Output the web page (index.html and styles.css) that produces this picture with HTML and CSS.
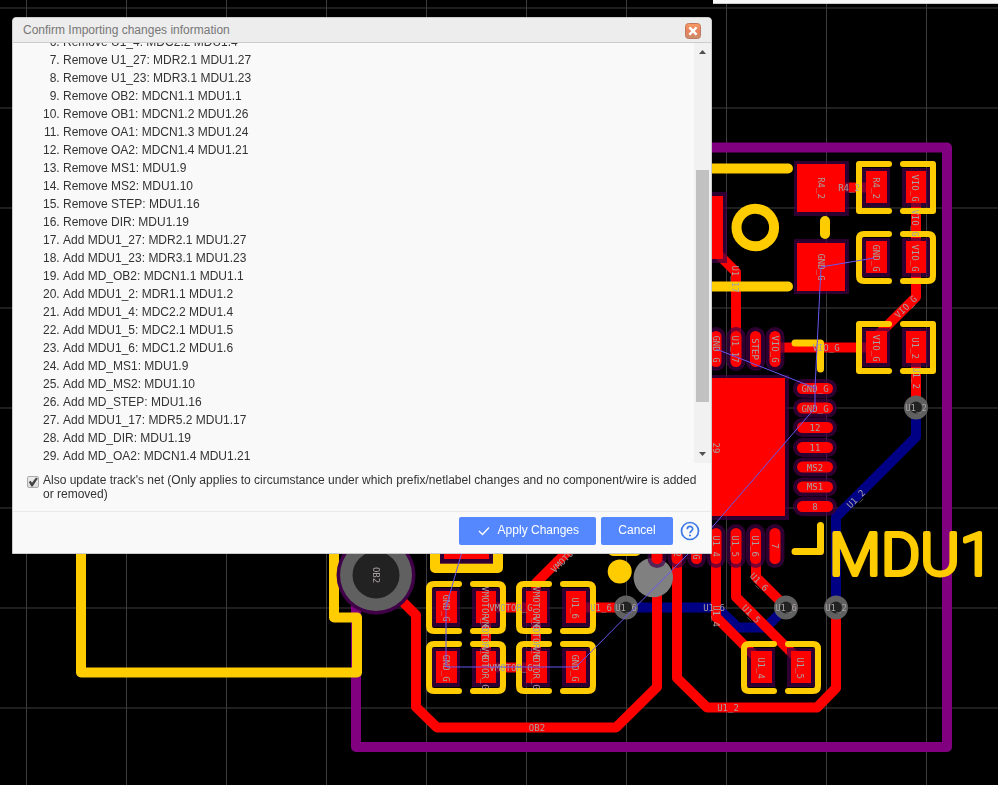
FILE: index.html
```html
<!DOCTYPE html>
<html lang="en">
<head>
<meta charset="utf-8">
<title>Confirm Importing changes information</title>
<link rel="stylesheet" href="styles.css">
</head>
<body>
<svg class="board" aria-label="PCB layout">
  <defs>
    <pattern id="grid" x="26" y="7" width="100" height="100" patternUnits="userSpaceOnUse">
      <path d="M0 1H100" stroke="#1e1e1e" stroke-width="2"/>
      <path d="M.5 0V100" stroke="#3c3c3c"/>
    </pattern>
    <g id="pads">
      <rect class="halo" x="-34" y="-19" width="28" height="39"/>
      <rect class="copper" x="-30" y="-16" width="21" height="32"/>
      <rect class="halo" x="6" y="-19" width="28" height="39"/>
      <rect class="copper" x="10" y="-16" width="20" height="32"/>
    </g>
    <g id="round">
      <use href="#pads"/>
      <path class="outline" d="M-7-23H-32Q-37-23-37-18V19Q-37 24-32 24H-7M7-23H32Q37-23 37-18V19Q37 24 32 24H7"/>
    </g>
    <g id="square">
      <use href="#pads"/>
      <path class="outline" d="M-7-23H-37V24H-7M7-23H37V24H7"/>
    </g>
    <g id="vpin">
      <rect class="halo" x="-9.500" y="-22" width="19" height="44" rx="9.500"/>
      <rect class="copper" x="-5.500" y="-18" width="11" height="36" rx="5.500"/>
    </g>
    <g id="hpin">
      <rect class="halo" x="-22" y="-9.500" width="44" height="19" rx="9.500"/>
      <rect class="copper" x="-18" y="-5.500" width="36" height="11" rx="5.500"/>
    </g>
    <g id="via">
      <circle r="12" fill="#606060"/>
      <circle r="6" fill="#222"/>
    </g>
  </defs>

  <rect width="100%" height="100%" fill="url(#grid)"/>

  <g class="track blue">
    <path d="M836 607V517L916 437V407"/>
    <path d="M626 607.500H717L738 627.500H766L786 607"/>
  </g>

  <path class="edge" d="M356 560V747H947V147.500H690"/>

  <g class="track red">
    <path d="M376 575L416 615V707L437 727.500H616L657 687V540"/>
    <path d="M677 550V678L707 707.500H817L836 688V607"/>
    <path d="M916 347V407"/>
    <path d="M916 187V297L876 337V347"/>
    <path d="M821 187.500H876"/>
    <path d="M775 347.500H876"/>
    <path d="M706 242L736 272V347"/>
    <path d="M716 545V617L761 662"/>
    <path d="M736 545V597L801 662"/>
    <path d="M756 545V577L786 607"/>
    <path d="M590 529L536 583V667M486 607V667M486 607.500H536M486 667.500H536M576 607.500H626"/>
  </g>

  <path class="silk" d="M81 540V672.500H357V617.500H334V540"/>
  <path class="silk" d="M700 168.500H788M700 286.500H788M825 221V234M613 551H636"/>
  <circle cx="755.300" cy="227.500" r="18.800" fill="none" stroke="#fc0" stroke-width="10"/>
  <circle cx="619.700" cy="571.500" r="12" fill="#fc0"/>
  <path class="silk mark" d="M795 343H820.500V369M820.500 525.500V551.500H795"/>
  <path class="silk" d="M435 540V568H498V540"/>

  <circle cx="376" cy="575" r="39.500" fill="#400048"/>
  <circle cx="376" cy="575" r="36" fill="#606060"/>
  <circle cx="376" cy="575" r="23.500" fill="#222"/>
  <circle cx="653.300" cy="577.500" r="19.700" fill="#808080"/>

  <rect class="halo" x="440" y="520" width="53" height="44"/>
  <rect class="copper" x="444" y="520" width="45" height="39"/>
  <rect class="halo" x="690" y="192" width="37" height="71"/>
  <rect class="copper" x="690" y="196" width="33" height="63"/>
  <rect class="halo" x="794" y="161" width="55" height="55"/>
  <rect class="copper" x="797" y="164" width="48" height="48"/>
  <rect class="halo" x="794" y="239" width="55" height="55"/>
  <rect class="copper" x="797" y="243" width="48" height="48"/>
  <rect class="halo" x="640" y="375" width="149" height="145"/>
  <rect class="copper" x="640" y="378" width="145" height="138"/>

  <use href="#square" x="896" y="187"/>
  <use href="#round" x="896" y="257"/>
  <use href="#square" x="896" y="347"/>
  <use href="#round" x="466" y="607"/>
  <use href="#round" x="556" y="607"/>
  <use href="#round" x="466" y="667"/>
  <use href="#round" x="556" y="667"/>
  <use href="#round" x="781" y="667"/>

  <use href="#vpin" x="716" y="349"/><use href="#vpin" x="736" y="349"/>
  <use href="#vpin" x="755.500" y="349"/><use href="#vpin" x="775" y="349"/>
  <use href="#vpin" x="657" y="546"/><use href="#vpin" x="677" y="546"/>
  <use href="#vpin" x="696.500" y="546"/><use href="#vpin" x="716" y="546"/>
  <use href="#vpin" x="736" y="546"/><use href="#vpin" x="755.500" y="546"/>
  <use href="#vpin" x="775" y="546"/>
  <use href="#hpin" x="815" y="388.500"/><use href="#hpin" x="815" y="408"/>
  <use href="#hpin" x="815" y="427.500"/><use href="#hpin" x="815" y="447.500"/>
  <use href="#hpin" x="815" y="467"/><use href="#hpin" x="815" y="487"/>
  <use href="#hpin" x="815" y="506.500"/>

  <use href="#via" x="916" y="407.500"/><use href="#via" x="626" y="607.500"/>
  <use href="#via" x="786" y="607.500"/><use href="#via" x="836" y="607.500"/>

  <text class="refdes" x="829" y="575">MDU1</text>

  <g class="net">
    <text x="849" y="188">R4_2</text>
    <text x="826" y="348">VIO_G</text>
    <text x="815" y="389">GND_G</text>
    <text x="815" y="409">GND_G</text>
    <text x="815" y="428">12</text>
    <text x="815" y="448">11</text>
    <text x="815" y="468">MS2</text>
    <text x="815" y="487">MS1</text>
    <text x="815" y="507">8</text>
    <text x="916" y="408">U1_2</text>
    <text x="601" y="608">U1_6</text>
    <text x="626" y="608">U1_6</text>
    <text x="714" y="608">U1_6</text>
    <text x="786" y="608">U1_6</text>
    <text x="836" y="608">U1_2</text>
    <text x="728" y="708">U1_2</text>
    <text x="537" y="728">OB2</text>
    <text x="511" y="608">VMOTOR_G</text>
    <text x="511" y="668">VMOTOR_G</text>
    <text transform="translate(376 575) rotate(90)">OB2</text>
    <text transform="translate(821 188) rotate(90)">R4_2</text>
    <text transform="translate(821 267) rotate(90)">GND_G</text>
    <text transform="translate(876 188) rotate(90)">R4_2</text>
    <text transform="translate(915 188) rotate(90)">VIO_G</text>
    <text transform="translate(915 223) rotate(90)">VIO_G</text>
    <text transform="translate(876 258) rotate(90)">GND_G</text>
    <text transform="translate(915 258) rotate(90)">VIO_G</text>
    <text transform="translate(876 348) rotate(90)">VIO_G</text>
    <text transform="translate(915 348) rotate(90)">U1_2</text>
    <text transform="translate(916 378) rotate(90)">U1_2</text>
    <text transform="translate(735 279) rotate(90)">U1_17</text>
    <text transform="translate(716 349) rotate(90)">GND_G</text>
    <text transform="translate(735 349) rotate(90)">U1_17</text>
    <text transform="translate(755 349) rotate(90)">STEP</text>
    <text transform="translate(775 349) rotate(90)">VIO_G</text>
    <text transform="translate(716 448) rotate(90)">29</text>
    <text transform="translate(677 546) rotate(90)">U1_2</text>
    <text transform="translate(696 546) rotate(90)">GND_G</text>
    <text transform="translate(716 546) rotate(90)">U1_4</text>
    <text transform="translate(735 546) rotate(90)">U1_5</text>
    <text transform="translate(755 546) rotate(90)">U1_6</text>
    <text transform="translate(775 546) rotate(90)">7</text>
    <text transform="translate(716 616) rotate(90)">U1_4</text>
    <text transform="translate(761 668) rotate(90)">U1_4</text>
    <text transform="translate(800 668) rotate(90)">U1_5</text>
    <text transform="translate(446 608) rotate(90)">GND_G</text>
    <text transform="translate(446 668) rotate(90)">GND_G</text>
    <text transform="translate(485 608) rotate(90)">VMOTOR_G</text>
    <text transform="translate(485 638) rotate(90)">VMOTOR_G</text>
    <text transform="translate(485 668) rotate(90)">VMOTOR_G</text>
    <text transform="translate(536 608) rotate(90)">VMOTOR_G</text>
    <text transform="translate(536 638) rotate(90)">VMOTOR_G</text>
    <text transform="translate(536 668) rotate(90)">VMOTOR_G</text>
    <text transform="translate(575 608) rotate(90)">U1_6</text>
    <text transform="translate(575 668) rotate(90)">GND_G</text>
    <text transform="translate(759 582) rotate(45)">U1_6</text>
    <text transform="translate(751 614) rotate(45)">U1_5</text>
    <text transform="translate(906 307) rotate(-45)">VIO_G</text>
    <text transform="translate(856 499) rotate(-45)">U1_2</text>
    <text transform="translate(568 556) rotate(-45)">VMOTOR_G</text>
  </g>

  <path class="rats" d="M874 258L821 267L815 388V408L696 546L576 667H446V607L466 538M716 349L815 388"/>
</svg>

<div class="toolbar-edge"></div>

<main class="dialog" role="dialog" aria-labelledby="dialog-title">
  <header class="dialog-header">
    <h1 id="dialog-title">Confirm Importing changes information</h1>
    <button class="close" type="button" aria-label="Close">
      <svg viewBox="0 0 16 16" width="16" height="16">
        <defs><linearGradient id="warm" x2="0" y2="1"><stop stop-color="#f99b62"/><stop offset=".5" stop-color="#e8825e"/><stop offset="1" stop-color="#c98e6c"/></linearGradient></defs>
        <rect x=".5" y=".5" width="15" height="15" rx="3" fill="url(#warm)" stroke="#c07860"/>
        <path d="M5.200 5.200L10.800 10.800M10.800 5.200L5.200 10.800" stroke="#fff" stroke-width="2.400" stroke-linecap="square"/>
      </svg>
    </button>
  </header>

  <div class="changes">
    <ol start="6">
      <li>Remove U1_4: MDC2.2 MDU1.4</li>
      <li>Remove U1_27: MDR2.1 MDU1.27</li>
      <li>Remove U1_23: MDR3.1 MDU1.23</li>
      <li>Remove OB2: MDCN1.1 MDU1.1</li>
      <li>Remove OB1: MDCN1.2 MDU1.26</li>
      <li>Remove OA1: MDCN1.3 MDU1.24</li>
      <li>Remove OA2: MDCN1.4 MDU1.21</li>
      <li>Remove MS1: MDU1.9</li>
      <li>Remove MS2: MDU1.10</li>
      <li>Remove STEP: MDU1.16</li>
      <li>Remove DIR: MDU1.19</li>
      <li>Add MDU1_27: MDR2.1 MDU1.27</li>
      <li>Add MDU1_23: MDR3.1 MDU1.23</li>
      <li>Add MD_OB2: MDCN1.1 MDU1.1</li>
      <li>Add MDU1_2: MDR1.1 MDU1.2</li>
      <li>Add MDU1_4: MDC2.2 MDU1.4</li>
      <li>Add MDU1_5: MDC2.1 MDU1.5</li>
      <li>Add MDU1_6: MDC1.2 MDU1.6</li>
      <li>Add MD_MS1: MDU1.9</li>
      <li>Add MD_MS2: MDU1.10</li>
      <li>Add MD_STEP: MDU1.16</li>
      <li>Add MDU1_17: MDR5.2 MDU1.17</li>
      <li>Add MD_DIR: MDU1.19</li>
      <li>Add MD_OA2: MDCN1.4 MDU1.21</li>
    </ol>
    <div class="scrollbar" aria-hidden="true">
      <svg viewBox="0 0 17 17" width="17" height="17"><path d="M5 11L8.500 7L12 11Z" fill="#505050"/></svg>
      <div class="rail"><div class="thumb"></div></div>
      <svg viewBox="0 0 17 17" width="17" height="17"><path d="M5 6L8.500 10L12 6Z" fill="#505050"/></svg>
    </div>
  </div>

  <div class="option">
    <input id="update-net" type="checkbox" checked>
    <label for="update-net">Also update track's net (Only applies to circumstance under which prefix/netlabel changes and no component/wire is added or removed)</label>
  </div>

  <footer class="actions">
    <button class="primary" type="button">
      <svg viewBox="0 0 12 10" width="12" height="10"><path d="M1 5L4.500 8.500L11 1.500" fill="none" stroke="#fff" stroke-width="1.300"/></svg>
      Apply Changes
    </button>
    <button class="primary" type="button">Cancel</button>
    <button class="help" type="button" aria-label="Help">
      <svg viewBox="0 0 20 20" width="20" height="20" fill="none" stroke="#3b78e7" stroke-width="1.700"><circle cx="10" cy="10" r="8.500"/><path d="M7.300 8.200C7.300 4.500 12.700 4.600 12.700 8C12.700 9.800 10 10 10 12.200"/><path d="M10 13.700V15.300" stroke-width="2"/></svg>
    </button>
  </footer>
</main>
</body>
</html>
```

FILE: styles.css
```css
* {
  box-sizing: border-box;
}

body {
  margin: 0;
  min-height: 100vh;
  overflow: hidden;
  background: #000;
  color: #333;
  font: 12px/18px "Liberation Sans", Arial, sans-serif;
}

button {
  border: 0;
  padding: 0;
  background: none;
  font: inherit;
  cursor: pointer;
}

svg {
  display: block;
}

/* Board canvas */
.board {
  position: fixed;
  inset: 0;
  width: 100%;
  height: 100%;
}

.track,
.edge,
.silk,
.outline,
.rats {
  fill: none;
  stroke-width: 10px;
  stroke-linecap: round;
  stroke-linejoin: round;
}

.red { stroke: #f00; }
.blue { stroke: #000084; }
.edge { stroke: #800080; }
.silk { stroke: #fc0; }
.mark { stroke-width: 7px; }

.outline {
  stroke: #fc0;
  stroke-width: 6px;
}

.rats {
  stroke: #6458f0;
  stroke-width: 1px;
}

.halo { fill: rgb(64 0 70 / 70%); }
.copper { fill: #f00; }

.net text {
  fill: #a8a0a0;
  font: 9px "DejaVu Sans Mono", monospace;
  text-anchor: middle;
  dominant-baseline: central;
}

.refdes {
  fill: #fc0;
  stroke: #fc0;
  stroke-width: 4px;
  stroke-linejoin: round;
  font: 300 60px Roboto, sans-serif;
}

.toolbar-edge {
  position: absolute;
  top: 0;
  right: 0;
  left: 713px;
  height: 4px;
  border-bottom: 1px solid #ccc;
  background: #f8f8f8;
}

/* Dialog */
.dialog {
  position: absolute;
  top: 17px;
  left: 12px;
  width: 700px;
  max-width: calc(100vw - 24px);
  overflow: hidden;
  border: 1px solid #ccc;
  border-radius: 4px 4px 0 0;
  background: #f9f9f9;
}

.dialog-header {
  display: flex;
  align-items: center;
  justify-content: space-between;
  height: 25px;
  padding: 0 10px;
  border-bottom: 1px solid #ccc;
  background: #ededed;
}

.dialog-header h1 {
  margin: 0;
  color: #777;
  font-size: 12px;
  font-weight: normal;
}

.close {
  margin-top: 2px;
}

.changes {
  display: flex;
  height: 420px;
  overflow: hidden;
}

.changes ol {
  flex: 1;
  margin: -10px 0 0;
  padding: 0 0 0 50px;
}

.scrollbar {
  display: flex;
  flex-direction: column;
  width: 17px;
  background: #f1f1f1;
}

.rail {
  flex: 1;
  padding: 110px 2px 44px;
}

.thumb {
  height: 100%;
  background: #c1c1c1;
}

.option {
  display: flex;
  gap: 4px;
  padding: 10px 10px 10px 14px;
  line-height: 14px;
}

.option input {
  flex: none;
  width: 12px;
  height: 12px;
  margin: 3px 0 0;
  border: 1px solid #aaa;
  border-radius: 2px;
  appearance: none;
  background: linear-gradient(#eee, #ddd);
}

.option input:checked::before {
  content: "";
  display: block;
  height: 10px;
  background: #444;
  clip-path: polygon(8% 50%, 26% 38%, 40% 58%, 80% 4%, 98% 14%, 46% 94%, 34% 94%);
}

.actions {
  display: flex;
  align-items: center;
  justify-content: flex-end;
  gap: 5px;
  padding: 5px 9px 8px;
  border-top: 1px solid #e9e9e9;
}

.primary {
  display: flex;
  align-items: center;
  justify-content: center;
  gap: 8px;
  min-width: 72px;
  height: 28px;
  padding: 0 17px 2px;
  border-radius: 2px;
  background: #5588ff;
  color: #fff;
}

.primary svg {
  margin: 2px 0 0 2px;
}

.help {
  display: grid;
  place-items: center;
  width: 24px;
  height: 28px;
}
```
